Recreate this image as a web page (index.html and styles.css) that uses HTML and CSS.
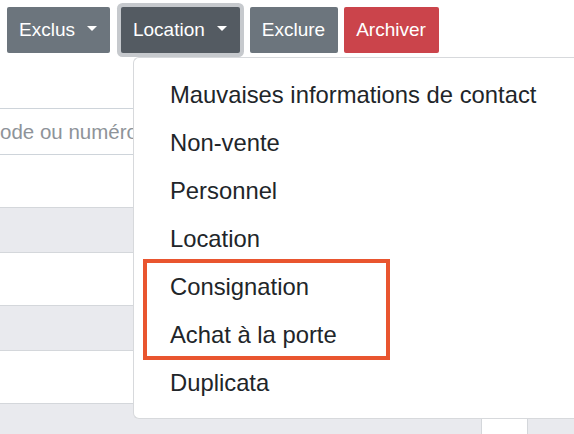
FILE: index.html
```html
<!DOCTYPE html>
<html lang="fr">
<head>
<meta charset="utf-8">
<title>Location</title>
<link rel="stylesheet" href="styles.css">
</head>
<body>
<div class="toolbar">
  <button class="btn btn-secondary btn-exclus">Exclus <span class="caret"></span></button>
  <button class="btn btn-dark btn-location">Location <span class="caret"></span></button>
  <button class="btn btn-secondary btn-exclure">Exclure</button>
  <button class="btn btn-danger">Archiver</button>
</div>
<div class="content">
  <div class="search"><span class="placeholder">ode ou numéro</span></div>
  <div class="rows">
    <div class="row row-white"></div>
    <div class="row row-gray"></div>
    <div class="row row-white"></div>
    <div class="row row-gray"></div>
    <div class="row row-white"></div>
    <div class="row row-gray row-last"><div class="cell-white"></div></div>
  </div>
</div>
<div class="menu">
  <div class="item">Mauvaises informations de contact</div>
  <div class="item">Non-vente</div>
  <div class="item">Personnel</div>
  <div class="item">Location</div>
  <div class="item">Consignation</div>
  <div class="item">Achat à la porte</div>
  <div class="item">Duplicata</div>
  <div class="highlight"></div>
</div>
</body>
</html>
```
FILE: styles.css
```css
html, body {
  margin: 0;
  padding: 0;
  background: #ffffff;
  overflow: hidden;
  width: 574px;
  height: 434px;
}
body {
  font-family: "Liberation Sans", Arial, Helvetica, sans-serif;
  color: #212529;
  position: relative;
}
.toolbar {
  display: flex;
  align-items: flex-start;
  padding: 7px 0 0 7px;
  height: 46px;
}
.btn {
  font-family: "Liberation Sans", Arial, Helvetica, sans-serif;
  font-size: 19px;
  color: #ffffff;
  border: none;
  border-radius: 2px;
  height: 46px;
  padding: 0 13px 0 12px;
  display: flex;
  align-items: center;
  white-space: nowrap;
  margin: 0;
}
.btn-secondary { background: #6c757d; }
.btn-dark {
  background: #545b62;
  box-shadow: 0 0 0 4px #c6c9cd;
}
.btn-danger { background: #cb444b; }
.btn-exclus { margin-right: 11px; }
.btn-location { margin-right: 10px; }
.btn-exclure { margin-right: 6px; }
.caret {
  display: inline-block;
  width: 0;
  height: 0;
  margin-left: 12px;
  margin-top: -4px;
  border-top: 5px solid #ffffff;
  border-left: 5px solid transparent;
  border-right: 5px solid transparent;
}
.content {
  padding-top: 55px;
}
.search {
  height: 45px;
  border-top: 1px solid #ced4da;
  border-bottom: 1px solid #ced4da;
  display: flex;
  align-items: center;
  overflow: hidden;
}
.placeholder {
  font-size: 20.5px;
  color: #8e9399;
  margin-left: 0;
  white-space: nowrap;
}
.row {
  border-bottom: 1px solid #d4d7db;
  position: relative;
}
.row-white { background: #ffffff; height: 52px; }
.row-gray { background: #e9eaee; height: 44px; }
.row-last { height: 40px; border-bottom: none; }
.cell-white {
  position: absolute;
  left: 481px;
  top: 0;
  width: 45px;
  height: 100%;
  background: #ffffff;
  border-left: 1px solid #d4d7db;
  border-right: 1px solid #d4d7db;
}
.menu {
  position: absolute;
  left: 133px;
  right: 0;
  top: 57px;
  background: #ffffff;
  border: 1px solid #d7d9dc;
  border-right: none;
  border-radius: 6px 0 0 6px;
  padding: 13px 0 11px 0;
}
.item {
  font-size: 23.8px;
  line-height: 48px;
  height: 48px;
  padding-left: 36px;
  color: #212529;
  white-space: nowrap;
}
.highlight {
  position: absolute;
  left: 9px;
  top: 201px;
  width: 239px;
  height: 93px;
  border: 4px solid #e9552f;
}
```
